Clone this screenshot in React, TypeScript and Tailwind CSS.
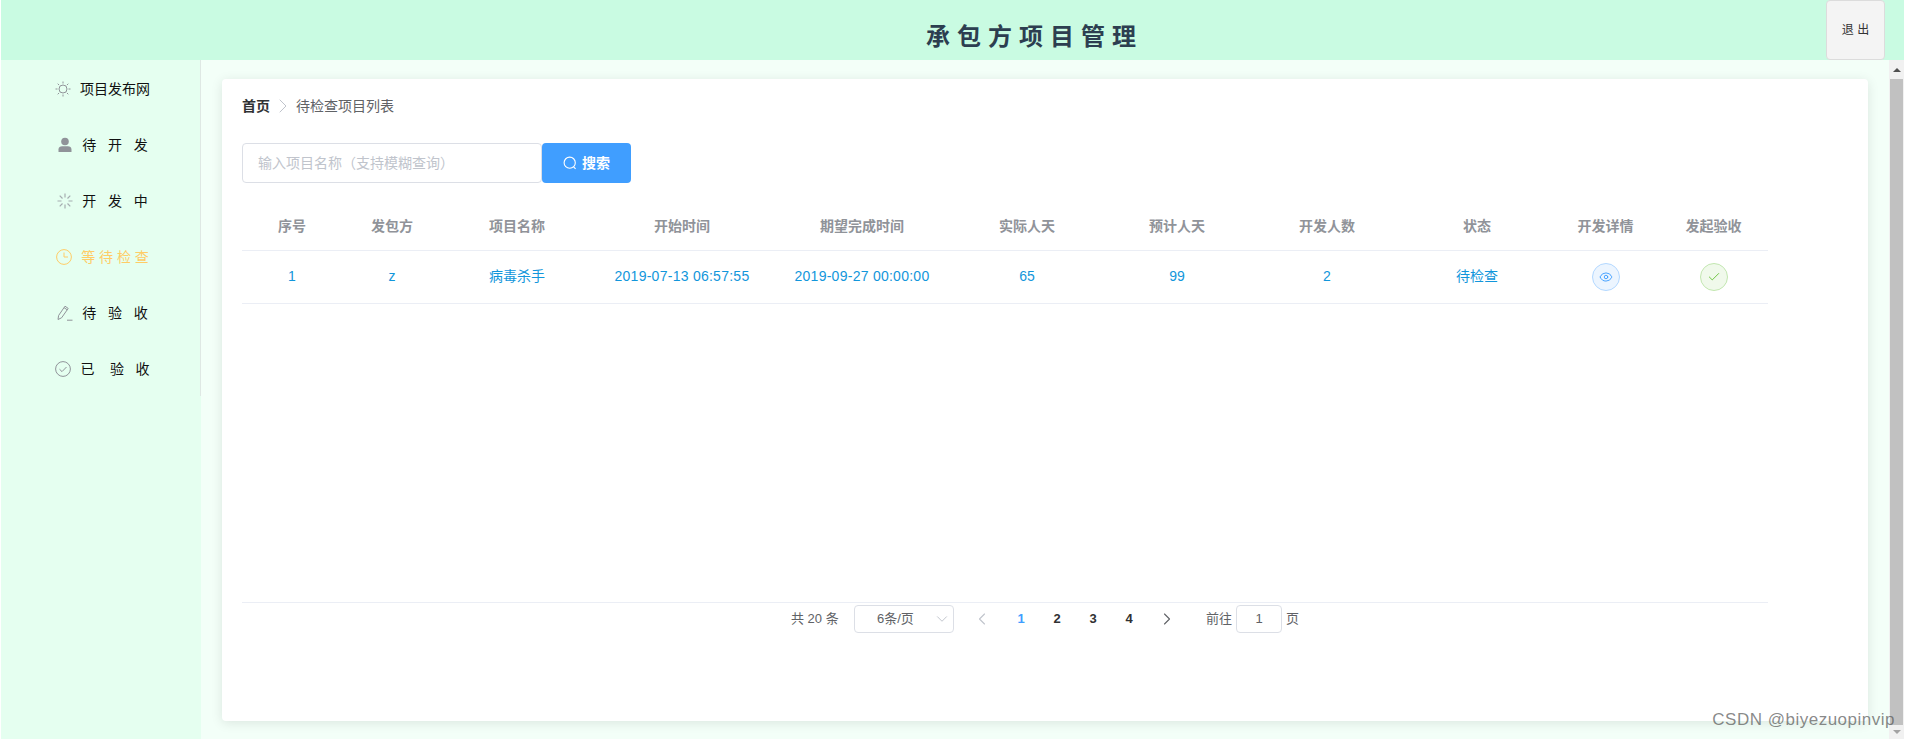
import React from "react";
import { ChevronDown, ChevronLeft, ChevronRight, Check, Eye } from "lucide-react";

const FONT = '"Liberation Sans", "Noto Sans CJK SC", sans-serif';

const SunIcon = () => (
  <svg viewBox="0 0 16 16" className="w-4 h-4" fill="none" stroke="#909399" strokeWidth="1">
    <circle cx="8" cy="8" r="4" />
    <path d="M8 0.5v2M8 13.5v2M0.5 8h2M13.5 8h2M2.7 2.7l1.4 1.4M11.9 11.9l1.4 1.4M2.7 13.3l1.4-1.4M11.9 4.1l1.4-1.4" />
  </svg>
);

const UserIcon = () => (
  <svg viewBox="0 0 16 16" className="w-4 h-4" fill="#909399">
    <circle cx="8" cy="4.5" r="3.8" />
    <path d="M1.5 15v-2.5c0-2 1.6-3.2 3.6-3.2h5.8c2 0 3.6 1.2 3.6 3.2V15z" />
  </svg>
);

const LoadingIcon = () => (
  <svg viewBox="0 0 16 16" className="w-4 h-4" fill="none" stroke="#a5adb0" strokeWidth="1.2">
    <path d="M8 0.5v4M8 11.5v4M0.5 8h4M11.5 8h4M2.7 2.7l2.8 2.8M10.5 10.5l2.8 2.8M2.7 13.3l2.8-2.8M10.5 5.5l2.8-2.8" />
  </svg>
);

const ClockIcon = () => (
  <svg viewBox="0 0 16 16" className="w-4 h-4" fill="none" stroke="#ffcc66" strokeWidth="1">
    <circle cx="8" cy="8" r="7.4" />
    <path d="M8 3.5V8h4" />
  </svg>
);

const PencilIcon = () => (
  <svg viewBox="0 0 16 16" className="w-4 h-4" fill="none" stroke="#909399" strokeWidth="1">
    <path d="M1 14.5l0.6-4L8 1.2l3.2 2.2L4.6 12.8z" />
    <path d="M7 2.6l3.2 2.2" />
    <path d="M10 15.2h5.5" />
  </svg>
);

const CheckCircleIcon = () => (
  <svg viewBox="0 0 16 16" className="w-4 h-4" fill="none" stroke="#909399" strokeWidth="1">
    <circle cx="8" cy="8" r="7.4" />
    <path d="M4.5 8.2l2.5 2.4 4.5-4.6" />
  </svg>
);

const SearchIcon = () => (
  <svg viewBox="0 0 14 14" className="w-[14px] h-[14px]" fill="none" stroke="#ffffff" strokeWidth="1.1">
    <circle cx="6.7" cy="6.7" r="5.6" />
    <path d="M10.6 10.8l2 2" />
  </svg>
);

const menuItems = [
  { icon: <SunIcon />, label: "项目发布网" },
  { icon: <UserIcon />, label: "待\u00a0\u00a0\u00a0开\u00a0\u00a0\u00a0发" },
  { icon: <LoadingIcon />, label: "开\u00a0\u00a0\u00a0发\u00a0\u00a0\u00a0中" },
  { icon: <ClockIcon />, label: "等\u00a0待\u00a0检\u00a0查", active: true },
  { icon: <PencilIcon />, label: "待\u00a0\u00a0\u00a0验\u00a0\u00a0\u00a0收" },
  { icon: <CheckCircleIcon />, label: "已\u00a0\u00a0\u00a0\u00a0验\u00a0\u00a0\u00a0收" },
];

const columns = [
  { title: "序号", width: "w-[100px]" },
  { title: "发包方", width: "w-[100px]" },
  { title: "项目名称", width: "w-[150px]" },
  { title: "开始时间", width: "w-[180px]" },
  { title: "期望完成时间", width: "w-[180px]" },
  { title: "实际人天", width: "w-[150px]" },
  { title: "预计人天", width: "w-[150px]" },
  { title: "开发人数", width: "w-[150px]" },
  { title: "状态", width: "w-[150px]" },
  { title: "开发详情", width: "w-[107px]" },
  { title: "发起验收", width: "w-[109px]" },
];

const row = ["1", "z", "病毒杀手", "2019-07-13 06:57:55", "2019-09-27 00:00:00", "65", "99", "2", "待检查"];

const App: React.FC = () => {
  return (
    <div className="h-screen flex flex-col overflow-hidden pl-px pr-[3px] bg-white" style={{ fontFamily: FONT }}>
      {/* Header */}
      <header className="h-[60px] shrink-0 flex bg-[#c9fbe2]">
        <h1 className="ml-[925px] mt-[17px] text-[24px] leading-[40px] font-bold tracking-[7px] text-[#2c3e50]">
          承包方项目管理
        </h1>
        <button className="ml-auto mr-[19px] w-[59px] h-[60px] bg-[#f4f4f4] border border-[#dcdcdc] rounded text-[12px] text-[#333]">
          退&nbsp;出
        </button>
      </header>

      <div className="flex-1 flex min-h-0">
        {/* Sidebar */}
        <aside className="w-[200px] shrink-0 bg-[#e5fff0]">
          <ul className="h-[336px] pt-px border-r border-[#dfe8e4]">
            {menuItems.map((item) => (
              <li
                key={item.label}
                className={`h-[56px] pl-1 flex items-center justify-center gap-[9px] text-[14px] ${
                  item.active ? "text-[#ffcc66]" : "text-[#111]"
                }`}
              >
                {item.icon}
                <span>{item.label}</span>
              </li>
            ))}
          </ul>
        </aside>

        {/* Main */}
        <main className="flex-1 min-w-0 pl-[21px] pr-[21px] pt-[19px] pb-[18px] bg-[#f3fff8]">
          <div className="h-full bg-white rounded shadow-[0_2px_12px_0_rgba(0,0,0,0.1)] p-5">
            <div className="flex items-center h-[14px] text-[14px] leading-[14px]">
              <span className="font-bold text-[#303133]">首页</span>
              <ChevronRight className="w-6 h-6 ml-px shrink-0 text-[#c0c4cc]" strokeWidth={1} />
              <span className="text-[#606266] ml-px">待检查项目列表</span>
            </div>

            <div className="flex mt-[30px]">
              <div className="w-[300px] h-10 border border-[#dcdfe6] rounded bg-white flex items-center pl-[15px] text-[14px] text-[#c0c4cc]">
                输入项目名称（支持模糊查询）
              </div>
              <button className="w-[89px] h-10 bg-[#409eff] rounded text-white text-[14px] font-bold flex items-center justify-center gap-[5px]">
                <SearchIcon />
                搜索
              </button>
            </div>

            <div className="mt-[21px] w-[1526px] h-[399px] border-b border-[#ebeef5]">
              <table className="table-fixed w-full text-[14px] text-center">
                <thead>
                  <tr className="h-[46px] border-b border-[#ebeef5]">
                    {columns.map((col) => (
                      <th key={col.title} className={`${col.width} font-bold text-[#909399]`}>
                        {col.title}
                      </th>
                    ))}
                  </tr>
                </thead>
                <tbody>
                  <tr className="h-[53px] border-b border-[#ebeef5] text-[#1296db]">
                    {row.map((cell, i) => (
                      <td key={i} className={i === 3 || i === 4 ? "tracking-[0.26px]" : ""}>
                        {cell}
                      </td>
                    ))}
                    <td>
                      <button className="w-7 h-7 rounded-full bg-[#ecf5ff] border border-[#b3d8ff] inline-flex items-center justify-center align-middle">
                        <Eye className="w-[14px] h-[14px] text-[#409eff]" strokeWidth={1.6} />
                      </button>
                    </td>
                    <td>
                      <button className="w-7 h-7 rounded-full bg-[#f0f9eb] border border-[#c2e7b0] inline-flex items-center justify-center align-middle">
                        <Check className="w-[14px] h-[14px] text-[#67c23a]" strokeWidth={1.6} />
                      </button>
                    </td>
                  </tr>
                </tbody>
              </table>
            </div>

            {/* Pagination */}
            <div className="mt-[2px] ml-[549px] h-7 flex items-center text-[13px] text-[#606266]">
              <span className="w-[48px] whitespace-nowrap">共 20 条</span>
              <div className="ml-[15px] w-[100px] h-7 border border-[#dcdfe6] rounded flex items-center pl-[22px] pr-[2px]">
                <span>6条/页</span>
                <ChevronDown className="ml-auto w-[18px] h-[18px] text-[#c0c4cc]" strokeWidth={1.3} />
              </div>
              <span className="ml-[13px] w-[30px] flex justify-center">
                <ChevronLeft className="w-5 h-5 text-[#c0c4cc]" strokeWidth={1.3} />
              </span>
              <div className="ml-[6px] flex font-bold text-[#303133]">
                {[1, 2, 3, 4].map((p) => (
                  <span key={p} className={`w-9 text-center ${p === 1 ? "text-[#409eff]" : ""}`}>
                    {p}
                  </span>
                ))}
              </div>
              <span className="ml-[5px] w-[30px] flex justify-center">
                <ChevronRight className="w-5 h-5 text-[#606266]" strokeWidth={1.3} />
              </span>
              <span className="ml-[24px]">前往</span>
              <div className="ml-1 w-[46px] h-7 border border-[#dcdfe6] rounded flex items-center justify-center">1</div>
              <span className="ml-1">页</span>
            </div>
          </div>
        </main>

        {/* Scrollbar */}
        <div className="w-[15px] shrink-0 flex flex-col items-center bg-[#f1f1f1]">
          <div className="h-[19px] flex items-center">
            <div className="w-0 h-0 border-x-[4px] border-x-transparent border-b-[4px] border-b-[#505050]" />
          </div>
          <div className="w-[13px] flex-1 bg-[#c1c1c1]" />
          <div className="h-[14px] flex items-center">
            <div className="w-0 h-0 border-x-[4px] border-x-transparent border-t-[4px] border-t-[#a3a3a3]" />
          </div>
        </div>
      </div>

      {/* Watermark */}
      <div className="absolute right-[12px] top-[710px] text-[17px] leading-[20px] tracking-[0.5px] text-[#555]/70">
        CSDN @biyezuopinvip
      </div>
    </div>
  );
};

export default App;
